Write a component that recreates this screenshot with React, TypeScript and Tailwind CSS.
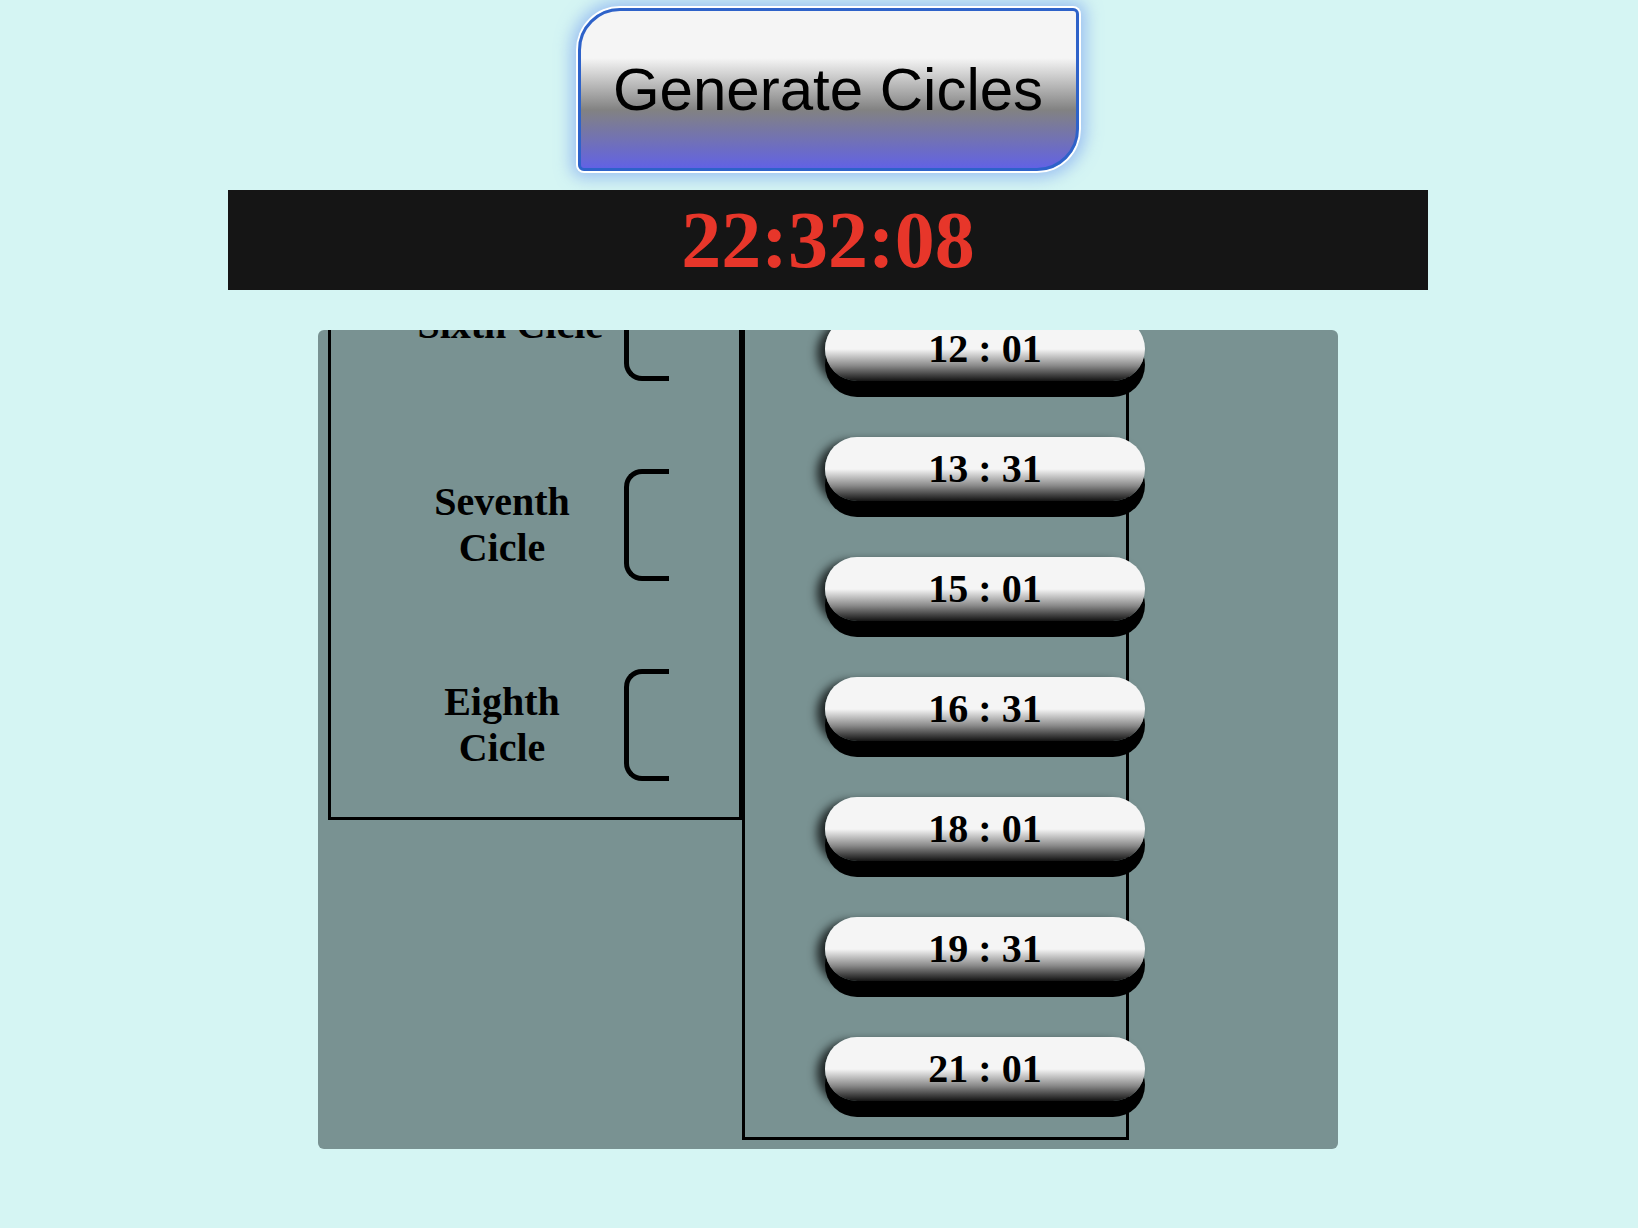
import React from "react";

const cicles = ["First", "Second", "Third", "Fourth", "Fifth", "Sixth", "Seventh", "Eighth"];

const times = [
  "00 : 01",
  "01 : 31",
  "03 : 01",
  "04 : 31",
  "06 : 01",
  "07 : 31",
  "09 : 01",
  "10 : 31",
  "12 : 01",
  "13 : 31",
  "15 : 01",
  "16 : 31",
  "18 : 01",
  "19 : 31",
  "21 : 01",
];

function Bracket() {
  return (
    <div className="w-[45px] h-[112px] shrink-0 border-l-[5px] border-t-[5px] border-b-[5px] border-black rounded-l-[18px]" />
  );
}

export default function App() {
  return (
    <div className="min-h-[1228px] w-full bg-[#d5f5f3] flex flex-col items-center pl-[18px] pt-[8px]">
      <button
        className="w-[501px] h-[163px] shrink-0 border-[3px] border-[#2e62c9] rounded-tl-[42px] rounded-br-[42px] rounded-tr-[6px] rounded-bl-[6px] bg-[linear-gradient(180deg,#f5f5f5_30%,#828282_63%,#6262e4_100%)] shadow-[0_0_0_2px_#ffffff,0_0_16px_7px_rgba(110,150,240,0.55)] flex items-center justify-center text-black text-[60px] font-['Liberation_Sans',Arial,sans-serif]"
      >
        Generate Cicles
      </button>

      <div className="mt-[19px] w-[1200px] h-[100px] shrink-0 bg-[#151515] flex items-center justify-center">
        <span className="text-[80px] font-bold leading-none text-[#e7362a] font-['Liberation_Serif','Times_New_Roman',serif]">
          22:32:08
        </span>
      </div>

      <div className="mt-[40px] w-[1020px] h-[819px] shrink-0 rounded-[6px] bg-[#799292] overflow-hidden p-[10px] font-['Liberation_Serif','Times_New_Roman',serif]">
        <div className="mt-[-1100px] flex flex-row items-start">
          <div className="w-[414px] shrink-0 border-[3px] border-black pt-[26px] pb-[36px] flex flex-col gap-[88px]">
            {cicles.map((c) => (
              <div key={c} className="h-[112px] flex items-center justify-end gap-[21px] px-[70px]">
                <div className="text-center text-[40px] leading-[46px] font-bold text-black">
                  {c} Cicle
                </div>
                <Bracket />
              </div>
            ))}
          </div>

          <div className="w-[387px] shrink-0 border-[3px] border-black pt-[114px] pb-[36px] flex flex-col gap-[56px]">
            {times.map((t) => (
              <div
                key={t}
                className="ml-[80px] w-[320px] h-[64px] shrink-0 rounded-full flex items-center justify-center bg-[linear-gradient(180deg,#f5f5f5_50%,#8a8a8a_76%,#000000_104%)] shadow-[0_16px_0_#000000,-8px_4px_10px_rgba(0,0,0,0.75)]"
              >
                <span className="text-[40px] leading-none font-bold text-black">{t}</span>
              </div>
            ))}
          </div>
        </div>
      </div>
    </div>
  );
}
